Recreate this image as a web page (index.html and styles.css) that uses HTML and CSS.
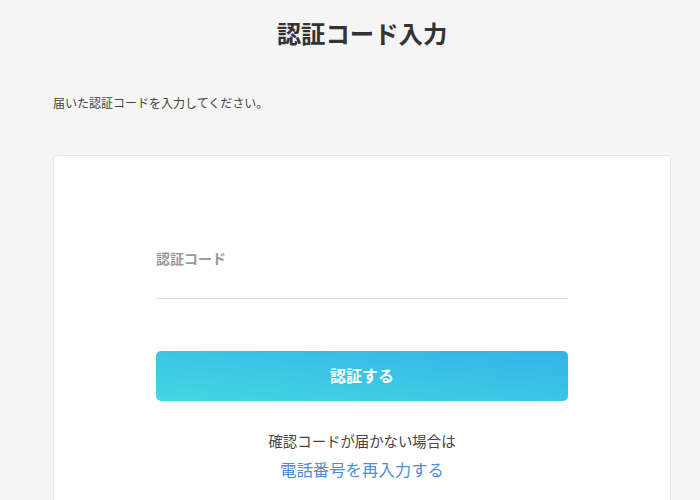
FILE: index.html
```html
<!DOCTYPE html>
<html lang="ja">
<head>
<meta charset="utf-8">
<title>認証コード入力</title>
<link rel="stylesheet" href="styles.css">
</head>
<body>
<div class="page">
  <h1 class="title">認証コード入力</h1>
  <p class="lead">届いた認証コードを入力してください。</p>
  <div class="card">
    <form class="form">
      <label class="label" for="code">認証コード</label>
      <input class="input" id="code" type="text">
      <button class="btn" type="button">認証する</button>
      <p class="note">確認コードが届かない場合は</p>
      <a class="link" href="#">電話番号を再入力する</a>
    </form>
  </div>
</div>
</body>
</html>
```
FILE: styles.css
```css
html, body {
  margin: 0;
  padding: 0;
}
body {
  background: #f5f5f5;
  font-family: "Noto Sans CJK JP", "Noto Sans", sans-serif;
  color: #333;
}
.page {
  padding: 15px 29px 0 53px;
}
.title {
  margin: 0;
  font-size: 24.4px;
  line-height: 36px;
  font-weight: 700;
  text-align: center;
  color: #333;
}
.lead {
  margin: 43px 0 0;
  font-size: 12px;
  line-height: 18px;
  color: #444;
}
.card {
  margin-top: 43px;
  background: #fff;
  border: 1px solid #e6e6e6;
  border-radius: 4px;
  padding: 92px 102px 60px;
}
.form {
  display: flex;
  flex-direction: column;
  margin: 0;
}
.label {
  font-size: 14px;
  line-height: 20px;
  font-weight: 700;
  color: #999;
}
.input {
  height: 31px;
  box-sizing: border-box;
  border: none;
  border-bottom: 1px solid #dcdcdc;
  background: transparent;
  outline: none;
  padding: 0;
  font: inherit;
}
.btn {
  margin-top: 52px;
  height: 50px;
  border: none;
  border-radius: 5px;
  background: linear-gradient(to right top, #44d7e1, #33b3e9);
  color: #fff;
  font-family: inherit;
  font-size: 16px;
  line-height: 22px;
  font-weight: 700;
  padding: 0 0 2px;
  cursor: pointer;
}
.note {
  margin: 30px 0 0;
  font-size: 14.4px;
  line-height: 20px;
  text-align: center;
  color: #444;
}
.link {
  margin-top: 6px;
  font-size: 16.4px;
  line-height: 24px;
  text-align: center;
  color: #4a8ed8;
  text-decoration: none;
}
```
